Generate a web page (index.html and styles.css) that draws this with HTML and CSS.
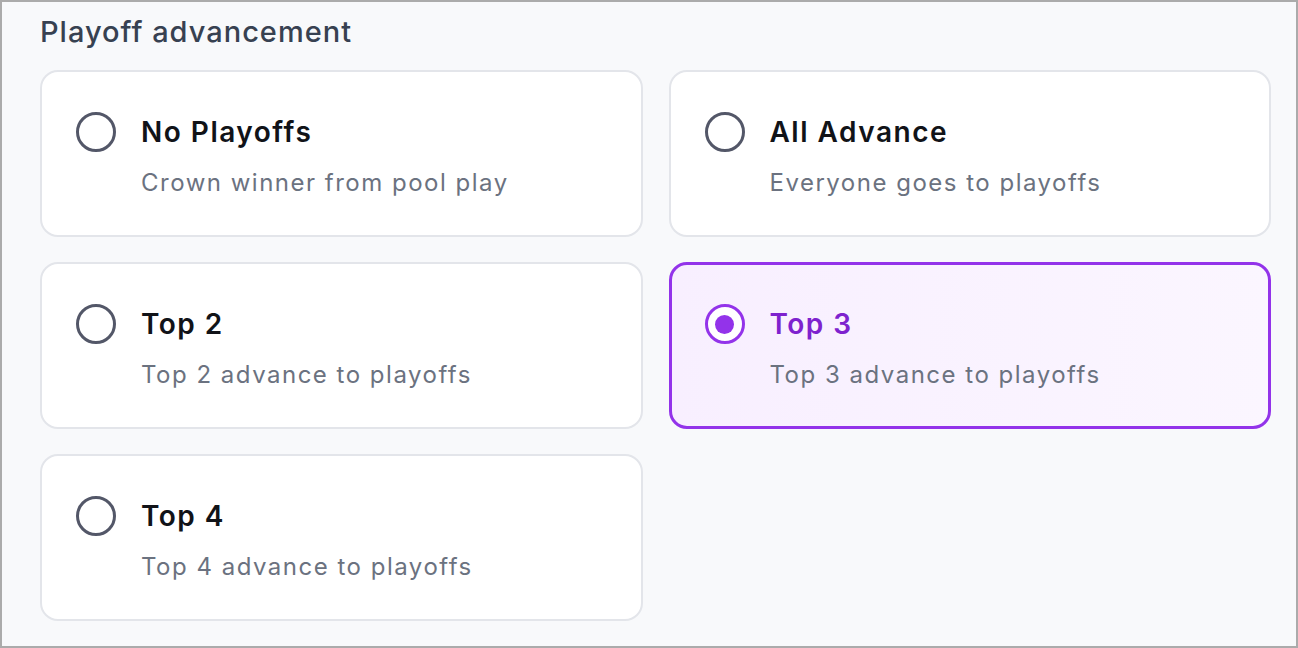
FILE: index.html
```html
<!DOCTYPE html>
<html lang="en">
<head>
<meta charset="utf-8">
<title>Playoff advancement</title>
<link rel="stylesheet" href="styles.css">
</head>
<body>
<div class="frame">
  <h2 class="heading">Playoff advancement</h2>
  <div class="options">
    <div class="card">
      <div class="row"><span class="radio"></span><span class="title">No Playoffs</span></div>
      <div class="desc">Crown winner from pool play</div>
    </div>
    <div class="card">
      <div class="row"><span class="radio"></span><span class="title">All Advance</span></div>
      <div class="desc">Everyone goes to playoffs</div>
    </div>
    <div class="card">
      <div class="row"><span class="radio"></span><span class="title">Top 2</span></div>
      <div class="desc">Top 2 advance to playoffs</div>
    </div>
    <div class="card selected">
      <div class="row"><span class="radio"></span><span class="title">Top 3</span></div>
      <div class="desc">Top 3 advance to playoffs</div>
    </div>
    <div class="card">
      <div class="row"><span class="radio"></span><span class="title">Top 4</span></div>
      <div class="desc">Top 4 advance to playoffs</div>
    </div>
  </div>
</div>
</body>
</html>
```

FILE: styles.css
```css
* { box-sizing: border-box; }
html, body { margin: 0; padding: 0; }
body {
  font-family: Inter, "Noto Sans", "Liberation Sans", sans-serif;
  background: #ffffff;
}
.frame {
  width: 1298px;
  height: 648px;
  border: 2px solid #ababab;
  background: #f8f9fb;
  padding: 12px 25px 0 38px;
}
.heading {
  margin: 0 0 20px 0;
  font-size: 29px;
  line-height: 36px;
  font-weight: 500;
  color: #374151;
  letter-spacing: 1px;
}
.options {
  display: grid;
  grid-template-columns: 1fr 1fr;
  column-gap: 26px;
  row-gap: 25px;
}
.card {
  background: #ffffff;
  border: 2px solid #e3e5ea;
  border-radius: 18px;
  padding: 40px 20px 36px 34px;
  height: 167px;
}
.row {
  display: flex;
  align-items: center;
  gap: 25px;
  height: 40px;
}
.radio {
  flex: none;
  width: 40px;
  height: 40px;
  border-radius: 50%;
  border: 3px solid #535768;
  background: #ffffff;
  display: flex;
  align-items: center;
  justify-content: center;
}
.title {
  font-size: 28px;
  line-height: 36px;
  font-weight: 600;
  color: #111318;
  letter-spacing: 1.5px;
}
.desc {
  margin: 15px 0 0 65px;
  font-size: 24px;
  line-height: 32px;
  color: #6b7280;
  letter-spacing: 1.5px;
}
.card.selected {
  border: 3px solid #9333ea;
  background: linear-gradient(90deg, #f8efff 0%, #fbf6ff 100%);
  padding: 39px 19px 35px 33px;
}
.card.selected .radio {
  border-color: #9333ea;
}
.card.selected .radio::after {
  content: "";
  width: 19px;
  height: 19px;
  border-radius: 50%;
  background: #9333ea;
}
.card.selected .title {
  color: #7e22ce;
}
```
